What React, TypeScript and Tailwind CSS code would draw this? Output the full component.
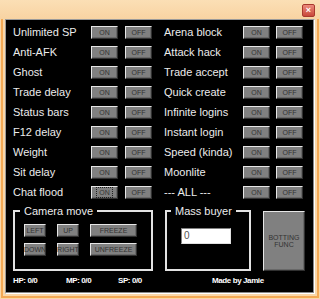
import React from 'react'

const face =
  "flex items-center justify-center bg-[#808080] border border-t-[#e6e6e6] border-l-[#e6e6e6] border-r-[#303030] border-b-[#303030] shadow-[inset_-1px_-1px_0_#686868] text-[7px] leading-none text-[#333333] font-['Liberation_Sans',Arial,sans-serif]"

function Toggle({ focus }: { focus?: boolean }) {
  return (
    <>
      <div className={face + ' w-[27px] h-[13px]'}>
        {focus ? (
          <span className="border border-dotted border-[#202020] px-[2px] py-[1px]">ON</span>
        ) : (
          'ON'
        )}
      </div>
      <div className={face + ' w-[27px] h-[13px]'}>OFF</div>
    </>
  )
}

const left = ['Unlimited SP', 'Anti-AFK', 'Ghost', 'Trade delay', 'Status bars', 'F12 delay', 'Weight', 'Sit delay', 'Chat flood']
const right = ['Arena block', 'Attack hack', 'Trade accept', 'Quick create', 'Infinite logins', 'Instant login', 'Speed (kinda)', 'Moonlite', '--- ALL ---']

function App() {
  return (
    <div className="w-[320px] h-[299px] flex flex-col bg-[#f9d7a8] font-['Liberation_Sans',Arial,sans-serif]">
      {/* title bar */}
      <div className="h-[19px] flex justify-end items-start pt-[4px] pr-[5px] bg-gradient-to-b from-[#fbdfb5] to-[#f8d3a2]">
        <div className="w-[13px] h-[13px] rounded-[2px] border border-[#a8392e] bg-gradient-to-b from-[#ec8a7c] to-[#c8473a] flex items-center justify-center text-[9px] leading-none font-bold text-white">
          ×
        </div>
      </div>

      <div className="flex-1 mx-[1px] mb-[1px] border-x-2 border-b-2 border-[#f3a955] px-[2px] pb-[2px] flex">
        {/* client */}
        <div className="flex-1 border border-t-[#9a9a9a] border-l-[#9a9a9a] border-r-white border-b-white bg-black flex flex-col shadow-[inset_-1px_-1px_0_#8a8a8a]">
          <div className="pt-[6px] pl-[7px] flex text-[11px] leading-[13px] text-[#ececec]">
            <div className="flex flex-col gap-[7px]">
              {left.map((l, i) => (
                <div key={l} className="flex items-center h-[13px]">
                  <span className="w-[78px]">{l}</span>
                  <div className="flex gap-[7px]">
                    <Toggle focus={i === 8} />
                  </div>
                </div>
              ))}
            </div>
            <div className="flex flex-col gap-[7px] ml-[12px]">
              {right.map((r) => (
                <div key={r} className="flex items-center h-[13px]">
                  <span className="w-[79px]">{r}</span>
                  <div className="flex gap-[6px]">
                    <Toggle />
                  </div>
                </div>
              ))}
            </div>
          </div>

          {/* bottom section */}
          <div className="flex items-start mt-[5px] pl-[7px]">
            <fieldset className="w-[140px] h-[67px] border-2 border-[#e2e2e2]">
              <legend className="ml-[5px] px-[4px] text-[11px] leading-[14px] text-[#ececec]">Camera move</legend>
              <div className="pl-[9px] pt-[6px] flex flex-col gap-[6px]">
                <div className="flex gap-[11px]">
                  <div className={face + ' w-[22px] h-[13px]'}>LEFT</div>
                  <div className={face + ' w-[22px] h-[13px]'}>UP</div>
                  <div className={face + ' w-[47px] h-[13px]'}>FREEZE</div>
                </div>
                <div className="flex gap-[11px]">
                  <div className={face + ' w-[22px] h-[13px]'}>DOWN</div>
                  <div className={face + ' w-[22px] h-[13px]'}>RIGHT</div>
                  <div className={face + ' w-[47px] h-[13px]'}>UNFREEZE</div>
                </div>
              </div>
            </fieldset>

            <fieldset className="ml-[12px] w-[86px] h-[67px] border-2 border-[#e2e2e2]">
              <legend className="ml-[4px] px-[4px] text-[11px] leading-[14px] text-[#ececec]">Mass buyer</legend>
              <div className="pl-[14px] pt-[10px]">
                <div className="w-[50px] h-[16px] bg-white border border-t-[#808080] border-l-[#808080] border-r-[#e0e0e0] border-b-[#e0e0e0] text-[10px] leading-[14px] text-[#555555] pl-[2px]">
                  0
                </div>
              </div>
            </fieldset>

            <div className={face + ' ml-[12px] mt-[7px] w-[42px] h-[60px] flex-col text-center leading-[10px]'}>
              <span>BOTTING</span>
              <span>FUNC</span>
            </div>
          </div>

          {/* footer */}
          <div className="flex pl-[7px] mt-[5px] text-[8px] leading-[10px] text-white font-bold tracking-[-0.4px]">
            <span className="w-[53px]">HP: 0/0</span>
            <span className="w-[52px]">MP: 0/0</span>
            <span className="w-[94px]">SP: 0/0</span>
            <span>Made by Jamie</span>
          </div>
        </div>
      </div>
    </div>
  )
}

export default App
